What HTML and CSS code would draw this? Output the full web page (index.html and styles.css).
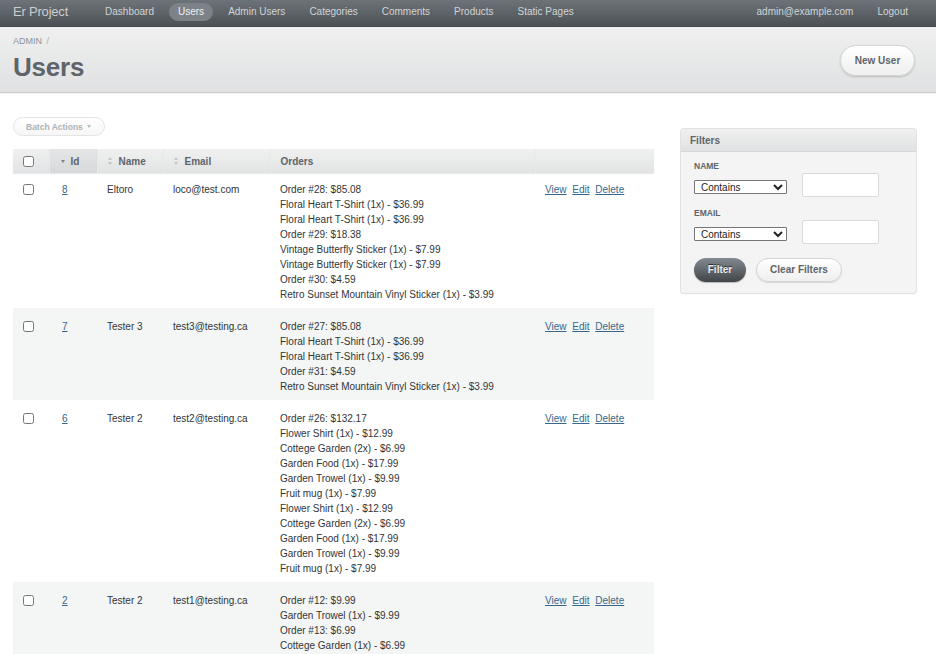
FILE: index.html
```html
<!DOCTYPE html>
<html>
<head>
<meta charset="utf-8">
<title>Users | Er Project</title>
<link rel="stylesheet" href="styles.css">
</head>
<body>
<div class="header">
  <div class="site-title">Er Project</div>
  <ul class="tabs">
    <li><a>Dashboard</a></li>
    <li class="current"><a>Users</a></li>
    <li><a>Admin Users</a></li>
    <li><a>Categories</a></li>
    <li><a>Comments</a></li>
    <li><a>Products</a></li>
    <li><a>Static Pages</a></li>
  </ul>
  <ul class="tabs utility">
    <li><a>admin@example.com</a></li>
    <li><a>Logout</a></li>
  </ul>
</div>

<div class="title-bar">
  <div class="title-left">
    <div class="breadcrumb">ADMIN <span class="sep">/</span></div>
    <h2 class="page-title">Users</h2>
  </div>
  <a class="btn new-btn">New User</a>
</div>

<div class="content">
  <div class="main">
    <div class="batch">Batch Actions <span class="caret"></span></div>
    <table class="index-table">
      <colgroup>
        <col class="c-check"><col class="c-id"><col class="c-name"><col class="c-email"><col class="c-orders"><col class="c-actions">
      </colgroup>
      <thead>
        <tr>
          <th><input type="checkbox" class="cb"></th>
          <th class="sorted"><span class="arrow-down"></span>Id</th>
          <th><span class="updown"></span>Name</th>
          <th><span class="updown"></span>Email</th>
          <th>Orders</th>
          <th></th>
        </tr>
      </thead>
      <tbody>
        <tr>
          <td><input type="checkbox" class="cb"></td>
          <td><a class="lnk">8</a></td>
          <td>Eltoro</td>
          <td>loco@test.com</td>
          <td>Order #28: $85.08<br>Floral Heart T-Shirt (1x) - $36.99<br>Floral Heart T-Shirt (1x) - $36.99<br>Order #29: $18.38<br>Vintage Butterfly Sticker (1x) - $7.99<br>Vintage Butterfly Sticker (1x) - $7.99<br>Order #30: $4.59<br>Retro Sunset Mountain Vinyl Sticker (1x) - $3.99</td>
          <td class="actions"><a class="lnk">View</a> <a class="lnk">Edit</a> <a class="lnk">Delete</a></td>
        </tr>
        <tr class="even">
          <td><input type="checkbox" class="cb"></td>
          <td><a class="lnk">7</a></td>
          <td>Tester 3</td>
          <td>test3@testing.ca</td>
          <td>Order #27: $85.08<br>Floral Heart T-Shirt (1x) - $36.99<br>Floral Heart T-Shirt (1x) - $36.99<br>Order #31: $4.59<br>Retro Sunset Mountain Vinyl Sticker (1x) - $3.99</td>
          <td class="actions"><a class="lnk">View</a> <a class="lnk">Edit</a> <a class="lnk">Delete</a></td>
        </tr>
        <tr>
          <td><input type="checkbox" class="cb"></td>
          <td><a class="lnk">6</a></td>
          <td>Tester 2</td>
          <td>test2@testing.ca</td>
          <td>Order #26: $132.17<br>Flower Shirt (1x) - $12.99<br>Cottege Garden (2x) - $6.99<br>Garden Food (1x) - $17.99<br>Garden Trowel (1x) - $9.99<br>Fruit mug (1x) - $7.99<br>Flower Shirt (1x) - $12.99<br>Cottege Garden (2x) - $6.99<br>Garden Food (1x) - $17.99<br>Garden Trowel (1x) - $9.99<br>Fruit mug (1x) - $7.99</td>
          <td class="actions"><a class="lnk">View</a> <a class="lnk">Edit</a> <a class="lnk">Delete</a></td>
        </tr>
        <tr class="even">
          <td><input type="checkbox" class="cb"></td>
          <td><a class="lnk">2</a></td>
          <td>Tester 2</td>
          <td>test1@testing.ca</td>
          <td>Order #12: $9.99<br>Garden Trowel (1x) - $9.99<br>Order #13: $6.99<br>Cottege Garden (1x) - $6.99</td>
          <td class="actions"><a class="lnk">View</a> <a class="lnk">Edit</a> <a class="lnk">Delete</a></td>
        </tr>
      </tbody>
    </table>
  </div>

  <div class="sidebar">
    <div class="panel">
      <h3 class="panel-title">Filters</h3>
      <div class="panel-body">
        <div class="filter">
          <label class="flabel">NAME</label>
          <div class="frow">
            <select class="fselect"><option>Contains</option></select>
            <input type="text" class="finput">
          </div>
        </div>
        <div class="filter">
          <label class="flabel">EMAIL</label>
          <div class="frow">
            <select class="fselect"><option>Contains</option></select>
            <input type="text" class="finput">
          </div>
        </div>
        <div class="fbuttons">
          <a class="btn dark-btn">Filter</a>
          <a class="btn clear-btn">Clear Filters</a>
        </div>
      </div>
    </div>
  </div>
</div>
</body>
</html>
```

FILE: styles.css
```css
* { box-sizing: border-box; }
html, body { margin: 0; padding: 0; }
body {
  font-family: "Liberation Sans", Arial, Helvetica, sans-serif;
  font-size: 10px;
  color: #323537;
  background: #fff;
  width: 936px;
  height: 654px;
  overflow: hidden;
}

/* header */
.header {
  height: 27px;
  background: linear-gradient(180deg, #6d7479 0%, #4c5155 100%);
  display: flex;
  align-items: flex-start;
  padding: 3px 19px 0 13px;
  border-bottom: 1px solid #45494c;
}
.site-title {
  font-size: 13px;
  line-height: 17px;
  color: #cdcdcd;
  margin-right: 28px;
  letter-spacing: -0.2px;
}
.tabs {
  list-style: none;
  margin: 0;
  padding: 0;
  display: flex;
  gap: 6px;
}
.tabs li a {
  display: block;
  padding: 0 9px;
  height: 18px;
  line-height: 17px;
  color: #d2d4d5;
  font-size: 10px;
  border-radius: 10px;
}
.tabs li.current a {
  background: #7c8287;
  color: #f2f2f2;
}
.utility { margin-left: auto; gap: 6px; }

/* title bar */
.title-bar {
  height: 66px;
  background: linear-gradient(180deg, #f0f0f0 0%, #dfe1e2 100%);
  border-bottom: 1px solid #cdcdcd;
  box-shadow: 0 1px 1px rgba(0,0,0,0.06);
  display: flex;
  align-items: center;
  justify-content: space-between;
  padding: 0 21px 0 13px;
}
.title-left { align-self: flex-start; padding-top: 8px; }
.breadcrumb {
  font-size: 9px;
  color: #8a949e;
  line-height: 12px;
}
.breadcrumb .sep { margin-left: 2px; color: #aab0b5; }
.page-title {
  margin: 5px 0 0;
  font-size: 26px;
  font-weight: bold;
  color: #5e6469;
  line-height: 30px;
  letter-spacing: -0.2px;
}
.btn {
  display: inline-block;
  font-weight: bold;
  text-align: center;
  border-radius: 200px;
  cursor: pointer;
}
.new-btn {
  width: 75px;
  height: 31px;
  line-height: 29px;
  font-size: 10px;
  color: #5e6469;
  background: linear-gradient(180deg, #ffffff 0%, #efefef 100%);
  border: 1px solid #d3d3d3;
  box-shadow: 0 1px 2px rgba(0,0,0,0.18);
  margin-top: 1px;
}

/* content */
.content {
  display: flex;
  padding: 24px 20px 0 13px;
  gap: 27px;
}
.main { width: 641px; flex: none; }
.sidebar { width: 235px; flex: none; padding-top: 12px; }

.batch {
  display: inline-flex;
  align-items: center;
  width: 92px;
  height: 19px;
  padding-left: 12px;
  font-size: 8.5px;
  font-weight: bold;
  color: #aeb3b7;
  border: 1px solid #e4e4e4;
  border-radius: 200px;
  background: linear-gradient(180deg, #ffffff 0%, #f6f6f6 100%);
}
.caret {
  display: inline-block;
  margin-left: 4px;
  width: 0; height: 0;
  border-left: 2.5px solid transparent;
  border-right: 2.5px solid transparent;
  border-top: 3px solid #b8bcbf;
}

.index-table {
  margin-top: 13px;
  width: 641px;
  border-collapse: collapse;
  table-layout: fixed;
}
.c-check { width: 36px; }
.c-id { width: 48px; }
.c-name { width: 66px; }
.c-email { width: 107px; }
.c-orders { width: 265px; }
.c-actions { width: 119px; }

.index-table th {
  height: 24px;
  text-align: left;
  font-weight: bold;
  color: #5e6469;
  font-size: 10px;
  padding: 1px 0 0 10px;
  background: linear-gradient(180deg, #f0f0f0 0%, #e1e3e4 100%);
  border-right: 1px solid #e9eaeb;
  box-shadow: 0 1px 1px rgba(0,0,0,0.08);
  vertical-align: middle;
}
.index-table th:last-child { border-right: none; }
.index-table th.sorted {
  background: linear-gradient(180deg, #e4e5e6 0%, #d6d8d9 100%);
  padding-left: 11px;
}
.index-table td {
  vertical-align: top;
  padding: 11px 0 6px 10px;
  line-height: 15px;
  font-size: 10px;
  color: #323537;
}
.index-table tbody tr:first-child td { padding-top: 9px; padding-bottom: 6px; }
.index-table tr.even td { background: #f4f5f5; }

.cb {
  margin: 0;
  width: 11px;
  height: 11px;
  vertical-align: middle;
}
.index-table td .cb { margin-top: 2px; vertical-align: top; }

.lnk {
  color: #38678b;
  text-decoration: underline;
}
.index-table td:nth-child(2) { padding-left: 13px; }
.actions .lnk { margin-right: 3px; }

.arrow-down {
  display: inline-block;
  width: 0; height: 0;
  border-left: 2.5px solid transparent;
  border-right: 2.5px solid transparent;
  border-top: 3px solid #7d8388;
  vertical-align: middle;
  margin-right: 6px;
  margin-top: -2px;
}
.updown {
  display: inline-block;
  position: relative;
  width: 5px;
  height: 8px;
  vertical-align: middle;
  margin-right: 6px;
  margin-top: -2px;
}
.updown::before, .updown::after {
  content: "";
  position: absolute;
  left: 0;
  width: 0; height: 0;
  border-left: 2.5px solid transparent;
  border-right: 2.5px solid transparent;
}
.updown::before { top: 0; border-bottom: 3px solid #c2c6c9; }
.updown::after { bottom: 0; border-top: 3px solid #c2c6c9; }

/* sidebar */
.panel {
  background: #f4f4f4;
  border-radius: 3px;
  box-shadow: 0 0 0 1px #e2e2e2, 0 1px 2px rgba(0,0,0,0.08);
}
.panel-title {
  margin: 0;
  height: 23px;
  line-height: 24px;
  padding-left: 9px;
  font-size: 10px;
  font-weight: bold;
  color: #5e6469;
  background: linear-gradient(180deg, #f0f0f0 0%, #dfe1e2 100%);
  border-bottom: 1px solid #d5d7d9;
  border-radius: 3px 3px 0 0;
}
.panel-body { padding: 9px 13px 11px 13px; }
.filter { margin-bottom: 11px; }
.flabel {
  display: block;
  font-size: 8.5px;
  font-weight: bold;
  color: #5e6469;
  line-height: 11px;
  margin-bottom: 1px;
}
.frow {
  display: flex;
  align-items: flex-start;
  gap: 15px;
}
.fselect {
  width: 93px;
  height: 14px;
  margin-top: 7px;
  font-family: "Liberation Sans", Arial, sans-serif;
  font-size: 10px;
  padding: 0 0 0 2px;
  border: 1px solid #767676;
  border-radius: 1px;
  background: #fff;
  color: #222;
}
.finput {
  width: 77px;
  height: 24px;
  border: 1px solid #d6dbe0;
  border-radius: 2px;
  background: #fff;
  margin: 0;
}
.fbuttons {
  display: flex;
  gap: 10px;
  margin-top: 14px;
}
.dark-btn {
  width: 52px;
  height: 24px;
  line-height: 24px;
  font-size: 10px;
  color: #efefef;
  background: linear-gradient(180deg, #838a90 0%, #414549 100%);
  box-shadow: 0 1px 1px rgba(0,0,0,0.25);
  text-shadow: 0 -1px 0 #2b2e30;
}
.clear-btn {
  width: 86px;
  height: 24px;
  line-height: 22px;
  font-size: 10px;
  color: #5e6469;
  background: linear-gradient(180deg, #ffffff 0%, #efefef 100%);
  border: 1px solid #d3d3d3;
  box-shadow: 0 1px 1px rgba(0,0,0,0.12);
}
```
